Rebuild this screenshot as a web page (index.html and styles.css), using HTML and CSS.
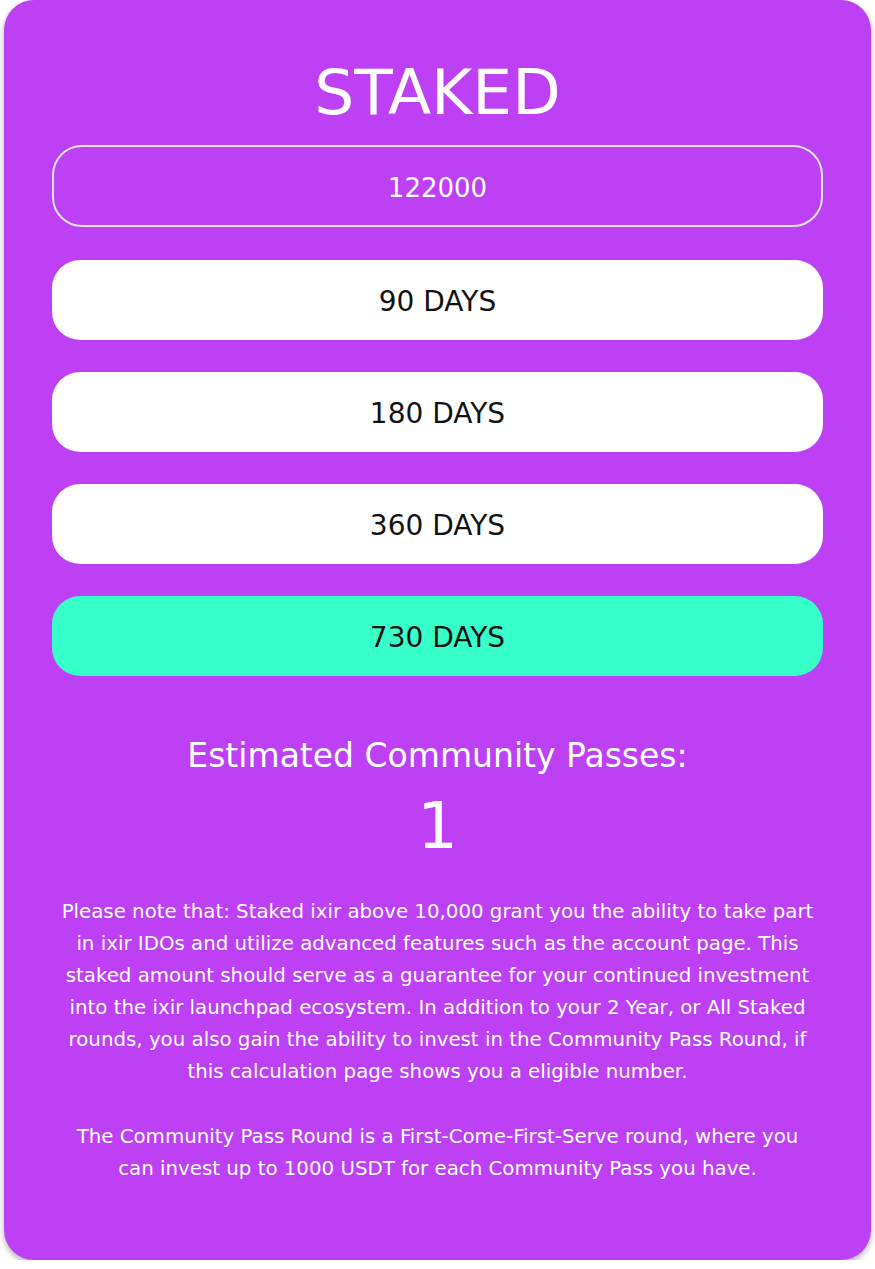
FILE: index.html
```html
<!DOCTYPE html>
<html>
<head>
    <title>Staked</title>
    <link rel="stylesheet" href="styles.css">
</head>
<body>
    <div class="card">
        <h1 class="title">STAKED</h1>
        <div class="amount">122000</div>
        <div class="periods">
            <a href="#" class="period">90 DAYS</a>
            <a href="#" class="period">180 DAYS</a>
            <a href="#" class="period">360 DAYS</a>
            <a href="#" class="period active">730 DAYS</a>
        </div>
        <h2 class="estimate">Estimated Community Passes:</h2>
        <div class="passes">1</div>
        <p class="note">Please note that: Staked ixir above 10,000 grant you the ability to take part in ixir IDOs and utilize advanced features such as the account page. This staked amount should serve as a guarantee for your continued investment into the ixir launchpad ecosystem. In addition to your 2 Year, or All Staked rounds, you also gain the ability to invest in the Community Pass Round, if this calculation page shows you a eligible number.</p>
        <p class="note">The Community Pass Round is a First-Come-First-Serve round, where you can invest up to 1000 USDT for each Community Pass you have.</p>
    </div>
</body>
</html>
```

FILE: styles.css
```css
body {
    margin: 0;
    padding: 0 4px;
    background-color: #fff;
    font-family: 'DejaVu Sans', Verdana, sans-serif;
}
.card {
    background-color: #be40f4; /* purple panel */
    border-radius: 30px;
    padding: 50px 48px 60px;
    height: 1260px;
    box-sizing: border-box;
    box-shadow: 0 3px 6px rgba(0, 0, 0, 0.3);
    color: #fff;
    text-align: center;
}
.title {
    margin: 0;
    font-size: 63px;
    font-weight: normal;
    line-height: 86px;
}
.amount {
    margin-top: 9px;
    height: 82px;
    line-height: 82px;
    border: 2px solid #e4e4ee;
    border-radius: 30px;
    box-sizing: border-box;
    font-size: 26px;
}
.periods {
    display: flex;
    flex-direction: column;
    gap: 32px;
    margin-top: 33px;
}
.period {
    display: block;
    height: 80px;
    line-height: 84px;
    background-color: #fff;
    color: #111;
    border-radius: 28px;
    font-size: 28px;
    text-decoration: none;
}
.period.active {
    background-color: #36ffca; /* selected period */
}
.estimate {
    margin: 50px 0 0;
    font-size: 33px;
    font-weight: normal;
    line-height: 60px;
}
.passes {
    font-size: 64px;
    line-height: 80px;
}
.note {
    margin: 30px 0 0;
    font-size: 19.8px;
    line-height: 32px;
}
.note + .note {
    margin-top: 33px;
    padding: 0 12px;
}
```
